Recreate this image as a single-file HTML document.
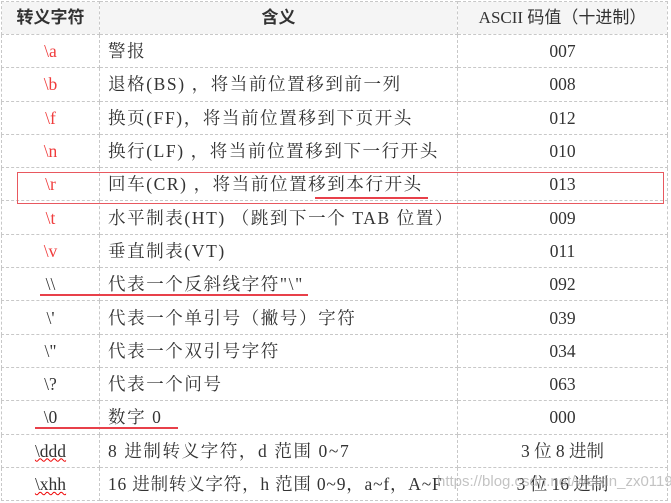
<!DOCTYPE html>
<html><head><meta charset="utf-8"><style>
body{margin:0;width:671px;height:503px;background:#fff;overflow:hidden;position:relative;font-family:"Liberation Serif","Noto Serif CJK SC",serif;color:#333;}
table{position:absolute;left:1px;top:1px;border-collapse:collapse;width:667px;table-layout:fixed;}
td,th{border:1px dashed #c8c8c8;height:32.3px;padding:0;font-size:17.5px;line-height:20px;vertical-align:middle;white-space:nowrap;overflow:hidden;}
th{background:#f5f5f5;font-family:"Liberation Sans","Noto Sans CJK SC",sans-serif;font-weight:bold;font-size:17px;height:32px;}
td.c{text-align:center;}
td.d{padding-left:8px;letter-spacing:1.6px;}
.r{color:#f03c3c;}
col.a{width:98px}col.b{width:358px}
.w{text-decoration:underline wavy #e00;text-decoration-thickness:1px;}
.box{position:absolute;left:17px;top:172px;width:645px;height:30px;border:1.5px solid #e8585f;}
.ul{position:absolute;height:2px;background:#e8404a;}
.wm{position:absolute;left:437px;top:473px;font-family:"Liberation Sans",sans-serif;font-size:15px;color:rgba(170,170,170,0.7);}
</style></head><body>
<table>
<col class="a"><col class="b"><col>
<tr><th>转义字符</th><th>含义</th><th style="font-weight:normal;font-family:'Liberation Serif','Noto Sans CJK SC',serif">ASCII 码值（十进制）</th></tr>
<tr><td class="c r">\a</td><td class="d">警报</td><td class="c">007</td></tr>
<tr><td class="c r">\b</td><td class="d">退格(BS) ，将当前位置移到前一列</td><td class="c">008</td></tr>
<tr><td class="c r">\f</td><td class="d">换页(FF)，将当前位置移到下页开头</td><td class="c">012</td></tr>
<tr><td class="c r">\n</td><td class="d">换行(LF) ，将当前位置移到下一行开头</td><td class="c">010</td></tr>
<tr><td class="c r">\r</td><td class="d">回车(CR) ，将当前位置移到本行开头</td><td class="c">013</td></tr>
<tr><td class="c r">\t</td><td class="d">水平制表(HT) （跳到下一个 TAB 位置）</td><td class="c">009</td></tr>
<tr><td class="c r">\v</td><td class="d">垂直制表(VT)</td><td class="c">011</td></tr>
<tr><td class="c">\\</td><td class="d">代表一个反斜线字符"\"</td><td class="c">092</td></tr>
<tr><td class="c">\'</td><td class="d">代表一个单引号（撇号）字符</td><td class="c">039</td></tr>
<tr><td class="c">\"</td><td class="d">代表一个双引号字符</td><td class="c">034</td></tr>
<tr><td class="c">\?</td><td class="d">代表一个问号</td><td class="c">063</td></tr>
<tr><td class="c">\0</td><td class="d">数字 0</td><td class="c">000</td></tr>
<tr><td class="c"><span class="w">\ddd</span></td><td class="d">8 进制转义字符，d 范围 0~7</td><td class="c">3 位 8 进制</td></tr>
<tr><td class="c"><span class="w">\xhh</span></td><td class="d" style="letter-spacing:0.8px">16 进制转义字符，h 范围 0~9，a~f，A~F</td><td class="c">3 位 16 进制</td></tr>
</table>
<div class="box"></div>
<div class="ul" style="left:315px;top:197px;width:113px"></div>
<div class="ul" style="left:40px;top:294px;width:268px"></div>
<div class="ul" style="left:35px;top:427px;width:143px"></div>
<div class="wm">https://blog.csdn.net/weixin_zx0119</div>
</body></html>
